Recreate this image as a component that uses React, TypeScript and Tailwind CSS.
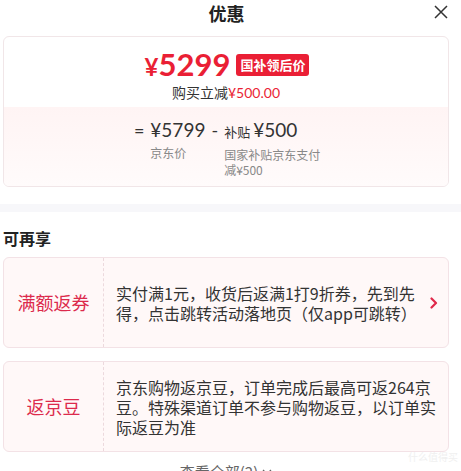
import React from "react";

const CJK = '"Noto Sans CJK SC", "Microsoft YaHei", sans-serif';
const NUM = 'Lato, "Noto Sans CJK SC", sans-serif';

function Chevron() {
  return (
    <svg width="8" height="12" viewBox="0 0 8 12" fill="none">
      <path d="M1.5 1.5 L6 6 L1.5 10.5" stroke="#e0294a" strokeWidth="2.2" strokeLinecap="round" strokeLinejoin="round" />
    </svg>
  );
}

function PromoCard({ label, lines, arrow }: { label: string; lines: string[]; arrow?: boolean }) {
  return (
    <div className="flex h-[91px] rounded-[6px] border border-[#f3e2e6] bg-[#fff8f8]">
      <div className="flex w-[100px] shrink-0 items-center justify-center border-r border-dashed border-[#ecd9dd] text-[18px] text-[#dc2a4c]">
        {label}
      </div>
      <div className="flex flex-1 items-center pl-[12px] pr-[10px]">
        <div className="flex-1 text-[16px] leading-[20px] text-[#333]">
          {lines.map((l, i) => (
            <div key={i} className="whitespace-nowrap">{l}</div>
          ))}
        </div>
        {arrow && (
          <div className="ml-[4px] flex items-center">
            <Chevron />
          </div>
        )}
      </div>
    </div>
  );
}

export default function App() {
  return (
    <div className="relative h-[471px] w-[461px] overflow-hidden bg-white" style={{ fontFamily: CJK }}>
      {/* header */}
      <div className="relative flex h-[26px] items-center justify-center pr-[8px]">
        <div className="text-[18px] font-bold leading-[26px] text-[#222]">优惠</div>
        <svg className="absolute right-[13px] top-[5px]" width="14" height="14" viewBox="0 0 14 14">
          <path d="M1 1 L13 13 M13 1 L1 13" stroke="#333" strokeWidth="1.5" />
        </svg>
      </div>

      {/* price card */}
      <div className="pl-[3px] pr-[12px] pt-[10px]">
        <div className="overflow-hidden rounded-[6px] border border-[#f1e6e8]">
          <div className="flex h-[70px] flex-col items-center pt-[12px]">
            <div className="flex h-[32px] items-center pl-[2px]">
              <div className="flex items-baseline font-bold text-[#ea1f35]" style={{ fontFamily: NUM }}>
                <span className="text-[24px] leading-[32px]">¥</span>
                <span className="text-[31px] leading-[32px]">5299</span>
              </div>
              <div className="ml-[6px] flex h-[22px] items-center rounded-[3px] bg-[#ea1f35] px-[4px] text-[13px] font-bold text-white">
                国补领后价
              </div>
            </div>
            <div className="mt-[1px] flex items-baseline text-[14px] leading-[20px] text-[#333]">
              <span>购买立减</span>
              <span className="text-[#ea1f35]" style={{ fontFamily: NUM }}>¥500.00</span>
            </div>
          </div>
          <div className="flex h-[79px] justify-center bg-gradient-to-b from-[#fff4f4] to-[#fffbfb] pl-[6px] pt-[11px]">
            <div className="flex items-start text-[#333]">
              <span className="mr-[6px] text-[18px] leading-[24px]" style={{ fontFamily: NUM }}>=</span>
              <div className="flex flex-col">
                <span className="text-[19px] leading-[24px]" style={{ fontFamily: NUM }}>¥5799</span>
                <span className="mt-[3px] text-[12px] leading-[15px] text-[#888]">京东价</span>
              </div>
              <span className="mx-[6px] text-[18px] leading-[24px]" style={{ fontFamily: NUM }}>-</span>
              <div className="flex w-[100px] flex-col">
                <div className="flex items-baseline">
                  <span className="mr-[3px] text-[13px] leading-[24px]">补贴</span>
                  <span className="text-[19px] leading-[24px]" style={{ fontFamily: NUM }}>¥500</span>
                </div>
                <span className="mt-[3px] text-[12px] leading-[15px] text-[#888]">国家补贴京东支付减¥500</span>
              </div>
            </div>
          </div>
        </div>
      </div>

      {/* band */}
      <div className="mt-[17px] h-[8px] bg-[#f7f7fa]" />

      {/* extra */}
      <div className="pl-[3px] pr-[12px]">
        <div className="mt-[15px] text-[16px] font-bold leading-[22px] text-[#222]">可再享</div>
        <div className="mt-[8px] flex flex-col gap-[13px]">
          <PromoCard
            label="满额返券"
            lines={["实付满1元，收货后返满1打9折券，先到先", "得，点击跳转活动落地页（仅app可跳转）"]}
            arrow
          />
          <PromoCard
            label="返京豆"
            lines={["京东购物返京豆，订单完成后最高可返264京", "豆。特殊渠道订单不参与购物返豆，以订单实", "际返豆为准"]}
          />
        </div>
        <div className="mt-[10px] flex items-center justify-center text-[15px] leading-[20px] text-[#666]">
          <span>查看全部(2)</span>
          <svg className="ml-[4px]" width="10" height="8" viewBox="0 0 10 8">
            <path d="M1 2 L5 6 L9 2" stroke="#666" strokeWidth="1.3" fill="none" />
          </svg>
        </div>
      </div>
      <div className="absolute left-[408px] top-[449px] text-[10px] text-[#f0f0f0]">什么值得买</div>
    </div>
  );
}
